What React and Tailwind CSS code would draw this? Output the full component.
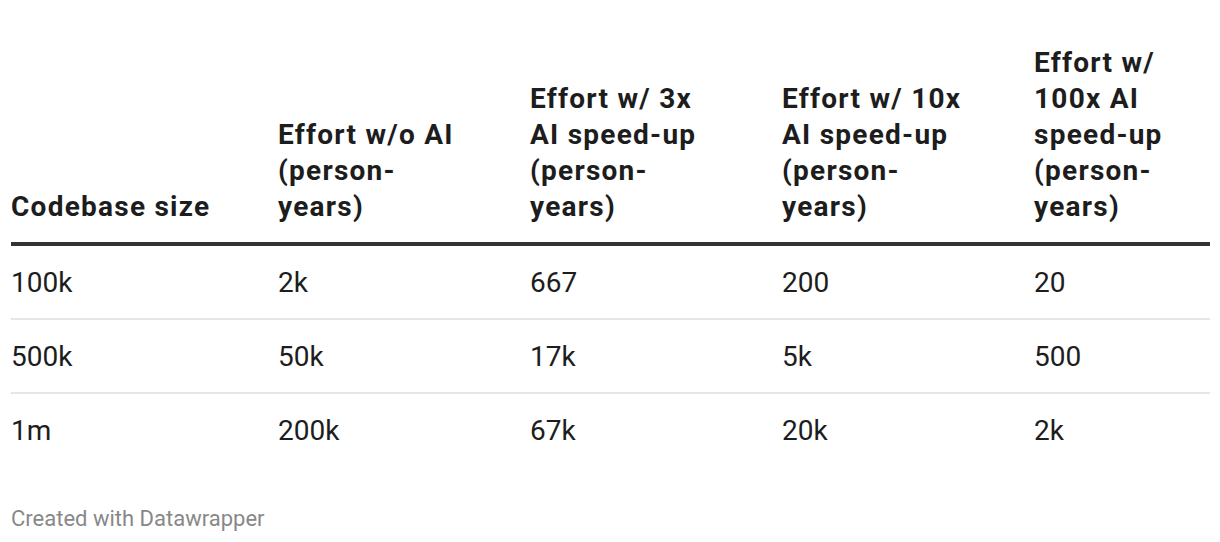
import React from "react";

const headers = [
  ["Codebase size"],
  ["Effort w/o AI", "(person-", "years)"],
  ["Effort w/ 3x", "AI speed-up", "(person-", "years)"],
  ["Effort w/ 10x", "AI speed-up", "(person-", "years)"],
  ["Effort w/", "100x AI", "speed-up", "(person-", "years)"],
];

const rows = [
  ["100k", "2k", "667", "200", "20"],
  ["500k", "50k", "17k", "5k", "500"],
  ["1m", "200k", "67k", "20k", "2k"],
];

const App = () => {
  return (
    <div
      className="w-[1220px] h-[542px] bg-white text-[#1d1d1d] px-[11px] pt-[45px]"
      style={{ fontFamily: "Roboto, 'Noto Sans', sans-serif" }}
    >
      <div className="w-[1199px]">
        <div className="grid grid-cols-[267px_252px_252px_252px_176px] border-b-4 border-[#333333]">
          {headers.map((lines, i) => (
            <div
              key={i}
              className="flex flex-col justify-end pb-[17px] font-bold text-[28px] leading-[36px] tracking-[1.25px]"
            >
              {lines.map((l, j) => (
                <span key={j} className="whitespace-nowrap">
                  {l}
                </span>
              ))}
            </div>
          ))}
        </div>
        {rows.map((row, r) => (
          <div
            key={r}
            className={
              "grid grid-cols-[267px_252px_252px_252px_176px] " +
              (r < rows.length - 1 ? "border-b-2 border-[#e6e6e6]" : "")
            }
          >
            {row.map((cell, c) => (
              <div
                key={c}
                className="pt-[19px] pb-[17px] text-[28px] leading-[36px]"
              >
                {cell}
              </div>
            ))}
          </div>
        ))}
        <div className="mt-[39px] text-[22px] leading-[28px] text-[#888888]">
          Created with Datawrapper
        </div>
      </div>
    </div>
  );
};

export default App;
